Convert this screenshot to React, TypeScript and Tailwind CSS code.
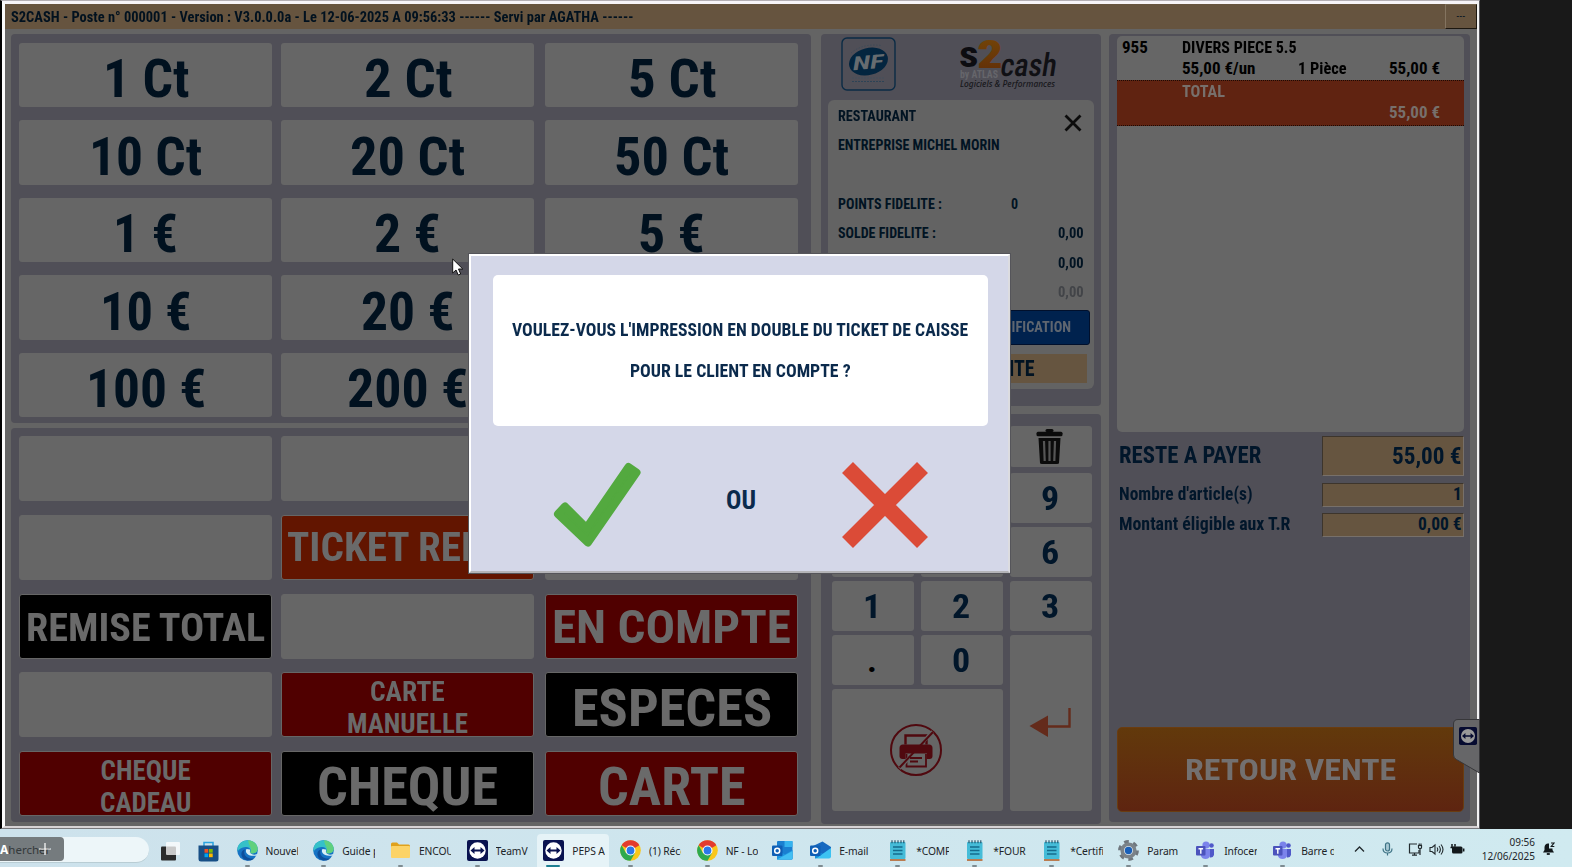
import { useLayoutEffect, useRef, type ReactNode } from "react";

/* Condensed label: squeezes its text horizontally to a given width. */
function Fit({ w, children, className = "" }: { w: number; children: ReactNode; className?: string }) {
  const ref = useRef<HTMLSpanElement>(null);
  useLayoutEffect(() => {
    const el = ref.current;
    if (el) el.style.transform = `scaleX(${w / el.offsetWidth})`;
  }, [w, children]);
  return (
    <span className={`block shrink-0 text-left ${className}`} style={{ width: w }}>
      <span ref={ref} className="inline-block origin-left whitespace-nowrap">
        {children}
      </span>
    </span>
  );
}

const CASH: [string, number][] = [
  ["1 Ct", 86], ["2 Ct", 88], ["5 Ct", 88],
  ["10 Ct", 113], ["20 Ct", 115], ["50 Ct", 115],
  ["1 €", 65], ["2 €", 67], ["5 €", 67],
  ["10 €", 92], ["20 €", 94], ["50 €", 94],
  ["100 €", 120], ["200 €", 121], ["500 €", 121],
];

type PayKey = { tone?: "black" | "red" | "orange"; lines?: [string, number][]; size?: string };
const PAY: PayKey[] = [
  {}, {}, {},
  {}, { tone: "orange", lines: [["TICKET REPAS", 241]], size: "text-[41px]" }, {},
  { tone: "black", lines: [["REMISE TOTAL", 239]], size: "text-[39px] pt-1" }, {},
  { tone: "red", lines: [["EN COMPTE", 239]], size: "text-[46px] pt-0.5" },
  {}, { tone: "red", lines: [["CARTE", 75], ["MANUELLE", 121]], size: "text-[27px] pt-[7px]" },
  { tone: "black", lines: [["ESPECES", 200]], size: "text-[51px] pt-[7px]" },
  { tone: "red", lines: [["CHEQUE", 90], ["CADEAU", 91]], size: "text-[27px] pt-[6px]" },
  { tone: "black", lines: [["CHEQUE", 181]], size: "text-[53px] pt-2" },
  { tone: "red", lines: [["CARTE", 148]], size: "text-[53px] pt-2" },
];
const TONES = { black: "bg-black", red: "bg-[#500000]", orange: "bg-[#621500]" };

function CashGrid() {
  return (
    <section className="h-[389px] rounded bg-[#504f57] px-2 pt-[8.500px]">
      <div className="grid grid-cols-[262px_264px_253px] gap-y-[13px]">
        {CASH.map(([label, w]) => (
          <button key={label} className="flex h-[64.500px] w-[253px] items-center justify-center rounded-[3px] bg-[#666] pt-[10px] text-[53px] leading-none text-[#01111f]">
            <Fit w={w}>{label}</Fit>
          </button>
        ))}
      </div>
    </section>
  );
}

function PayGrid() {
  return (
    <section className="h-[394px] rounded bg-[#504f57] px-2 pt-2">
      <div className="grid grid-cols-[262px_264px_253px] gap-y-[13.75px]">
        {PAY.map((k, i) => (
          <button key={i} className={`flex h-[65px] w-[253px] flex-col items-center justify-center rounded-[3px] border border-[#666] text-[#6a6a6a] ${k.tone ? TONES[k.tone] : "bg-[#666]"} ${k.size ?? ""}`}>
            {k.lines?.map(([t, w]) => (
              <Fit key={t} w={w} className={k.lines!.length > 1 ? "leading-[32px]" : "leading-none"}>{t}</Fit>
            ))}
          </button>
        ))}
      </div>
    </section>
  );
}

function NfLogo() {
  return (
    <svg className="h-[54px] w-[55px]" viewBox="0 0 55 54">
      <rect x="1" y="1" width="53" height="52" rx="5" fill="none" stroke="#0a2b45" strokeWidth="1.4" />
      <path d="M10 16 Q22 6 40 8.500" fill="none" stroke="#3f4c58" strokeWidth="1" strokeDasharray="1.500 1.500" />
      <ellipse cx="27.500" cy="24.500" rx="19.800" ry="13.500" fill="#03253f" transform="rotate(-14 27.500 24.500)" />
      <text x="11.500" y="32" fontSize="19" fontWeight="700" fontStyle="italic" fill="#666c70" textLength="31" lengthAdjust="spacingAndGlyphs" transform="rotate(-5 27 25)">NF</text>
      <path d="M11 41h33" stroke="#45515c" strokeWidth="1" strokeDasharray="2 1" />
      <path d="M11 44.500h33" stroke="#2d4356" strokeWidth="1" strokeDasharray="2 1" />
    </svg>
  );
}

function BrandLogo() {
  return (
    <svg className="h-[52px] w-[100px]" viewBox="0 0 100 52">
      <defs>
        <linearGradient id="two" x1="0" y1="0" x2="0" y2="1">
          <stop offset="0" stopColor="#754708" />
          <stop offset="1" stopColor="#602c08" />
        </linearGradient>
      </defs>
      <text x="-1" y="30" fontSize="36" fontWeight="700" fill="#0c0c10" textLength="19.500" lengthAdjust="spacingAndGlyphs">s</text>
      <text x="17" y="30.500" fontSize="38" fontWeight="900" fill="url(#two)" textLength="26" lengthAdjust="spacingAndGlyphs">2</text>
      <text x="38.500" y="39" fontSize="32" fontWeight="500" fill="#101014" textLength="56" lengthAdjust="spacingAndGlyphs" transform="translate(7 0) skewX(-9)">cash</text>
      <text x="0" y="40.500" fontSize="10.500" fontWeight="700" fill="#66666b" textLength="38" lengthAdjust="spacingAndGlyphs">by ATLAS</text>
      <text x="0" y="50" fontSize="8" fontStyle="italic" fontWeight="500" fill="#17171b" fontFamily="Noto Sans" textLength="95" lengthAdjust="spacingAndGlyphs">Logiciels &amp; Performances</text>
    </svg>
  );
}

function InfoRow({ label, w, value, vw, pos = "pr-[10px]", dim }: { label?: string; w?: number; value?: string; vw?: number; pos?: string; dim?: boolean }) {
  return (
    <div className={`flex h-[29.3px] items-center justify-between pl-[10px] ${pos}`}>
      {label ? <Fit w={w!}>{label}</Fit> : <span />}
      {value && <Fit w={vw!} className={dim ? "text-[#424448]" : ""}>{value}</Fit>}
    </div>
  );
}

function CustomerPanel() {
  return (
    <section className="h-[372px] rounded bg-[#504f57] px-[7px]">
      <div className="flex h-[65.500px] items-start justify-between pl-[12.500px] pr-[34.500px] pt-[3px]">
        <NfLogo />
        <BrandLogo />
      </div>
      <div className="relative h-[289.500px] rounded-md bg-[#636363] pt-[2px] text-[14px] leading-none text-[#011322]">
        <svg className="absolute right-[12.500px] top-[14.500px] h-[18px] w-[18px]" viewBox="0 0 18 18">
          <path d="M1.500 1.500 16.500 16.500M16.500 1.500 1.500 16.500" stroke="#0c0c0c" strokeWidth="2.800" />
        </svg>
        <InfoRow label="RESTAURANT" w={78} />
        <InfoRow label="ENTREPRISE MICHEL MORIN" w={162} />
        <InfoRow />
        <InfoRow label="POINTS FIDELITE :" w={104} value="0" vw={7} pos="pr-[76px]" />
        <InfoRow label="SOLDE FIDELITE :" w={98} value="0,00" vw={26} />
        <InfoRow value="0,00" vw={26} />
        <InfoRow value="0,00" vw={26} dim />
        <div className="ml-auto mr-[4px] mt-[3px] flex h-[35.500px] w-[126px] items-center justify-end rounded-[3px] border border-[#01102c] bg-[#00224e] pr-[18px] pt-[1px] text-[14.500px] text-[#5f6670]">
          <Fit w={87}>MODIFICATION</Fit>
        </div>
        <div className="ml-auto mr-[7px] mt-[9px] flex h-[28.500px] w-[252px] items-center justify-end bg-[#665540] pr-[52px] text-[21.500px]">
          <Fit w={148}>MISE EN ATTENTE</Fit>
        </div>
      </div>
    </section>
  );
}

const KEY = "flex items-center justify-center rounded-[3px] bg-[#666] pr-[2px] text-[34px] leading-none text-[#01162a]";

function Keypad() {
  return (
    <section className="h-[410px] rounded bg-[#504f57] pl-[11px] pt-[12px]">
      <div className="grid grid-cols-[82px_82px_82px] grid-rows-[43px_50px_50px_50px_50px_122px] gap-x-[6.800px] gap-y-[4px]">
        <div className={`${KEY} col-span-2 mb-[2.500px]`} />
        <button className={`${KEY} mb-[2.500px]`}>
          <svg className="h-[35px] w-[27px]" viewBox="0 0 27 35" fill="#0b0b0b">
            <rect x="9.500" y="0" width="8" height="3" rx="1.500" />
            <rect x="0.500" y="2.800" width="26" height="4.400" rx="1.500" />
            <path d="M2.500 9h22l-1.500 25q0 1-2 1H6q-2 0-2-1z" />
            <path d="M8 12l.7 20M13.500 12v20M19 12l-.7 20" stroke="#555" strokeWidth="2.200" />
          </svg>
        </button>
        {["7", "8", "9", "4", "5", "6", "1", "2", "3"].map((n) => (
          <button key={n} className={KEY}><Fit w={18}>{n}</Fit></button>
        ))}
        <button className={KEY}><span className="text-black">.</span></button>
        <button className={KEY}><Fit w={18}>0</Fit></button>
        <button className={`${KEY} row-span-2`}>
          <svg className="h-[30px] w-[42px]" viewBox="0 0 42 30">
            <path d="M40.500 0V18.500H16" fill="none" stroke="#642b1b" strokeWidth="2.400" />
            <path d="M0.500 18 19 7.500V29z" fill="#642b1b" />
          </svg>
        </button>
        <button className={`${KEY} col-span-2`}>
          <svg className="h-[52px] w-[52px]" viewBox="0 0 52 52">
            <circle cx="26" cy="26" r="25" fill="none" stroke="#50090f" strokeWidth="2" />
            <path d="M15.500 20.500V11.500H36.500V20.500" fill="none" stroke="#50090f" strokeWidth="2.400" />
            <path d="M13 20.500h26q3.500 0 3.500 3.500v8q0 3-3 3H37V29.500H15.500V35H12.500q-3 0-3-3v-8q0-3.500 3.500-3.500z" fill="#50090f" />
            <path d="M16.500 30v12.500h19.500V30M20 34h12M20 37.500h8" fill="none" stroke="#50090f" strokeWidth="1.800" />
            <path d="M42.500 7.500 33.500 17.500M19 34 9.500 44.500" stroke="#666" strokeWidth="3.500" />
            <path d="M43 8 9.500 43.500" stroke="#50090f" strokeWidth="2" />
          </svg>
        </button>
      </div>
    </section>
  );
}

function Field({ label, w, value, vw, row, box }: { label: string; w: number; value: string; vw: number; row: string; box: string }) {
  return (
    <div className={`flex w-[347px] items-center justify-between leading-none ${row}`}>
      <Fit w={w} className="ml-[2px]">{label}</Fit>
      <div className={`flex w-[142px] items-center justify-end border border-b-[#77706a] border-l-[#3d352c] border-r-[#77706a] border-t-[#3d352c] bg-[#665540] pr-[1px] ${box}`}>
        <Fit w={vw}>{value}</Fit>
      </div>
    </div>
  );
}

function TicketPanel() {
  return (
    <section className="flex h-[788px] w-[361px] flex-col rounded bg-[#504f57] px-2 pb-[10px] pt-[2px] text-[#01162a]">
      <div className="h-[396px] w-[347px] rounded-[5px] bg-[#666] text-[17px] leading-none text-black">
        <div className="h-[44px] pt-[1px]">
          <div className="flex h-[21px] items-center pl-[5px]">
            <Fit w={26}>955</Fit>
            <Fit w={115} className="ml-[33.500px]">DIVERS PIECE 5.5</Fit>
          </div>
          <div className="flex h-[20.500px] items-center pl-[65px]">
            <Fit w={73}>55,00 €/un</Fit>
            <Fit w={49} className="ml-[43px]">1 Pièce</Fit>
            <Fit w={51} className="ml-[42px]">55,00 €</Fit>
          </div>
        </div>
        <div className="h-[45.500px] border-y border-dotted border-[#1c0a04] bg-[#602311] text-[#77706c]">
          <div className="flex h-[20.500px] items-center pl-[65px]"><Fit w={43}>TOTAL</Fit></div>
          <div className="flex h-[21.500px] items-center pl-[272px]"><Fit w={51}>55,00 €</Fit></div>
        </div>
      </div>
      <Field label="RESTE A PAYER" w={142} value="55,00 €" vw={70} row="mt-[4px] h-[40px] text-[23.500px]" box="h-[40px] pt-[1px]" />
      <Field label="Nombre d'article(s)" w={134} value="1" vw={9} row="mt-[7px] h-[24px] text-[17.500px]" box="h-[24px]" />
      <Field label="Montant éligible aux T.R" w={171} value="0,00 €" vw={44} row="mt-[6px] h-[24px] text-[17.500px]" box="h-[24px]" />
      <button className="mt-auto flex h-[85.500px] w-[347px] shrink-0 items-center justify-center rounded-[5px] border border-[#6a3c10] bg-linear-to-b from-[#62390b] to-[#5e2410] pt-[2px] text-[29.500px] text-[#737070]">
        <Fit w={211}>RETOUR VENTE</Fit>
      </button>
    </section>
  );
}

function TeamIcon({ className = "h-[21px] w-[21px]" }: { className?: string }) {
  return (
    <svg className={className} viewBox="0 0 21 21">
      <rect width="21" height="21" rx="2" fill="#0a1350" />
      <circle cx="10.500" cy="10.500" r="8.200" fill="#fff" />
      <path d="M3.500 10.500 7.500 7v2.500h6V7l4 3.500-4 3.500v-2.500h-6V14z" fill="#0a1350" />
    </svg>
  );
}

function Dialog() {
  return (
    <div className="absolute left-[469px] top-[254px] flex h-[319px] w-[541px] flex-col items-center border-2 border-b-[#b4b4b8] border-l-white border-r-[#dcdce0] border-t-white bg-[#d4d7e8] pl-[1px] pt-[19px] text-[#0b2a4c] shadow-[0_0_0_1px_#55555a]">
      <div className="flex h-[150.500px] w-[495px] flex-col items-center rounded-[5px] bg-white pt-[34px] text-[18px]">
        <Fit w={456} className="h-[41px] leading-[41px]">VOULEZ-VOUS L'IMPRESSION EN DOUBLE DU TICKET DE CAISSE</Fit>
        <Fit w={221} className="h-[41px] leading-[41px]">POUR LE CLIENT EN COMPTE ?</Fit>
      </div>
      <div className="mt-[35.500px] flex w-[375px] items-center justify-between">
        <svg className="h-[87px] w-[88px]" viewBox="0 0 88 87">
          <path d="M75.500 6 83.500 11.500 35 81.500 5 53 12 45.500 33.500 67z" fill="#53a93f" stroke="#53a93f" strokeWidth="8" strokeLinejoin="round" />
        </svg>
        <Fit w={30} className="pb-[7px] text-[25.500px] leading-none">OU</Fit>
        <svg className="h-[86px] w-[86px]" viewBox="0 0 86 86">
          <path d="M5.500 5.500 80.500 80.500M80.500 5.500 5.500 80.500" stroke="#db4b37" strokeWidth="15.500" />
        </svg>
      </div>
    </div>
  );
}

/* ---------- taskbar ---------- */
function EdgeIcon() {
  return (
    <svg className="h-[21px] w-[21px]" viewBox="0 0 21 21">
      <circle cx="10.500" cy="10.500" r="10.300" fill="#1673c4" />
      <path d="M.6 8.500C2-2.500 20.500-2.500 20.700 9c0 4-5 5.500-7.700 3.500 2-3-1-6-4.500-5.500C5 7.300 1.500 9 .6 12z" fill="#35c1c8" />
      <path d="M11 .2c6 .3 9.700 4.500 9.700 8.800 0 4-5 5.500-7.700 3.500 2-2 .5-6-1-8z" fill="#6bd36b" opacity=".8" />
      <path d="M8 9.500c-2.500 5 1.500 10 9.500 8.800C14 22 6 21.500 4.500 15 4 12 5.500 10 8 9.500z" fill="#0d4f9c" />
      <path d="M9.500 9c-2 3 1 8 10 6.500l1-1.500c-4 1.500-6 .5-7.500-1.500-.5-1 .5-1.500 0-3z" fill="#d8eff6" />
    </svg>
  );
}
function ChromeIcon() {
  return (
    <svg className="h-[21px] w-[21px]" viewBox="0 0 21 21">
      <circle cx="10.500" cy="10.500" r="10.300" fill="#f9c71b" />
      <path d="M10.500 10.500 1.600 5.300A10.300 10.300 0 0 1 19.400 5.300z" fill="#e33b2e" />
      <path d="M1.600 5.300A10.300 10.300 0 0 0 10.500 20.800L15 13 6 13z" fill="#2da94f" />
      <circle cx="10.500" cy="10.500" r="5" fill="#fff" />
      <circle cx="10.500" cy="10.500" r="3.900" fill="#2b78e8" />
    </svg>
  );
}
function FolderIcon() {
  return (
    <svg className="h-[21px] w-[21px]" viewBox="0 0 21 21">
      <path d="M1 4q0-1.500 1.500-1.500H7l2 2h9.500Q20 4.500 20 6v6H1z" fill="#e0a11c" />
      <rect x="1" y="6" width="19" height="12" rx="1" fill="#fcd367" />
    </svg>
  );
}
function OutlookIcon() {
  return (
    <svg className="h-[21px] w-[21px]" viewBox="0 0 21 21">
      <rect x="5" y="1" width="15.500" height="18.500" rx="1" fill="#1a7fd0" />
      <path d="M12.500 1h8v6h-8z" fill="#35b3ee" />
      <path d="M5 10l8 4.500 7.500-4.500v8.500q0 1-1 1H5z" fill="#1f97e0" />
      <path d="M5 19.500 20.500 11v7.500q0 1-1 1z" fill="#42bff3" />
      <rect x="0" y="5.500" width="10.500" height="10.500" rx="1" fill="#0f5fb5" />
      <circle cx="5.200" cy="10.700" r="2.500" fill="none" stroke="#fff" strokeWidth="1.500" />
    </svg>
  );
}
function MailIcon() {
  return (
    <svg className="h-[21px] w-[21px]" viewBox="0 0 21 21">
      <path d="M3 6 12.500 1.500 21 7v3L7 18z" fill="#1769c0" />
      <path d="M21 8v8.500q0 2-2 2H6z" fill="#3cc2f2" />
      <path d="M5 13 13 13.500 6 18.500H5z" fill="#1590dc" />
      <rect x="0" y="5.500" width="10.500" height="10.500" rx="1" fill="#0f5fb5" />
      <circle cx="5.200" cy="10.700" r="2.500" fill="none" stroke="#fff" strokeWidth="1.500" />
    </svg>
  );
}
function NoteIcon() {
  return (
    <svg className="h-[21px] w-[21px]" viewBox="0 0 21 21">
      <rect x="3" y="2" width="15.500" height="17" rx="1" fill="#45bcd8" />
      <path d="M3 20h15.500" stroke="#b5622a" strokeWidth="1.600" />
      <path d="M5 .3v3M8 .3v3M11 .3v3M14 .3v3M16.800 .3v3" stroke="#1f4c63" strokeWidth="1.100" />
      <path d="M6 7h9.500M6 10.500h9.500M6 14h9.500" stroke="#146b8c" strokeWidth="1.300" />
    </svg>
  );
}
function GearIcon() {
  return (
    <svg className="h-[21px] w-[21px]" viewBox="0 0 21 21">
      <circle cx="10.500" cy="10.500" r="8.700" fill="none" stroke="#6f777e" strokeWidth="3.400" strokeDasharray="4.600 4.510" />
      <circle cx="10.500" cy="10.500" r="6.300" fill="#dce6ec" stroke="#7b8389" strokeWidth="3.600" />
      <circle cx="10.500" cy="10.500" r="3.700" fill="#1a60b8" />
    </svg>
  );
}
function TeamsIcon() {
  return (
    <svg className="h-[21px] w-[21px]" viewBox="0 0 21 21">
      <circle cx="11" cy="5" r="3.600" fill="#7b83eb" />
      <circle cx="16.500" cy="5.500" r="2.300" fill="#5059c9" />
      <path d="M13 9h6v6q-1 3-4 2.500z" fill="#5059c9" />
      <path d="M6 9h9v7q-1 3-4.500 3T6 16z" fill="#7b83eb" />
      <rect x="1" y="6" width="9.500" height="9.500" rx="1" fill="#4b53bc" />
      <path d="M3.500 8.700h4.600M5.800 8.700v5" stroke="#fff" strokeWidth="1.400" />
    </svg>
  );
}

type TaskItem = { icon: ReactNode; label: string; active?: boolean };
const TASKS: TaskItem[] = [
  { icon: <EdgeIcon />, label: "Nouvel" },
  { icon: <EdgeIcon />, label: "Guide p" },
  { icon: <FolderIcon />, label: "ENCOU" },
  { icon: <TeamIcon />, label: "TeamV" },
  { icon: <TeamIcon />, label: "PEPS A", active: true },
  { icon: <ChromeIcon />, label: "(1) Réce" },
  { icon: <ChromeIcon />, label: "NF - Lo" },
];
const TASKS_2: TaskItem[] = [
  { icon: <MailIcon />, label: "E-mail" },
  { icon: <NoteIcon />, label: "*COMP" },
  { icon: <NoteIcon />, label: "*FOURN" },
  { icon: <NoteIcon />, label: "*Certifi" },
  { icon: <GearIcon />, label: "Param" },
  { icon: <TeamsIcon />, label: "Infocen" },
  { icon: <TeamsIcon />, label: "Barre d" },
];

function Task({ icon, label, active }: TaskItem) {
  return (
    <div className={`relative flex h-[33px] w-[72px] shrink-0 items-center rounded-t pl-[6px] ${active ? "bg-[#e6f3f7]" : ""}`}>
      {icon}
      <span className="ml-[8px] w-[32.500px] overflow-hidden whitespace-nowrap text-[10.300px] leading-4 tracking-[-0.1px]">{label}</span>
      <span className={`absolute bottom-0 h-[2px] rounded ${active ? "left-[9px] w-[14px] bg-[#1d7f92]" : "left-[14px] w-[5px] bg-[#7d8b91]"}`} />
    </div>
  );
}

function Taskbar() {
  return (
    <footer className="flex h-[38px] items-end bg-linear-to-r from-[#cde2ec] to-[#d0eaf0] font-['Noto_Sans',sans-serif] font-normal text-[#1d2428]">
      <div className="relative mb-[4px] h-[26px] w-[149px] rounded-r-full border-b border-[#b9cdd4] bg-[#edf6f9]">
        <div className="flex h-[24px] w-[64px] items-center rounded-r bg-[#757b7e] pt-[2px] text-[11.500px] text-[#34393b]">
          <span className="text-[12px] font-bold text-white">A</span>
          <span className="whitespace-nowrap">hercher</span>
        </div>
        <svg className="absolute left-[39px] top-[6px] h-3 w-3" viewBox="0 0 12 12"><path d="M6 0v12M0 6h12" stroke="#fff" strokeWidth="1.200" /></svg>
      </div>
      <div className="mb-[5px] ml-[12px] flex items-center gap-[16px]">
        <svg className="h-[21px] w-[21px]" viewBox="0 0 21 21">
          <rect x="0" y="5.500" width="15" height="14" rx="1" fill="#2b2b2b" />
          <rect x="5" y="1" width="14" height="13" rx="1" fill="#fff" opacity=".75" />
        </svg>
        <svg className="h-[21px] w-[21px]" viewBox="0 0 21 21">
          <path d="M6 5V1.500h9V5" fill="none" stroke="#2aa3e0" strokeWidth="1.500" />
          <path d="M.5 4.500h20V18q0 2.500-2.500 2.500H3Q.5 20.500.5 18z" fill="#174f86" />
          <path d="M6.500 8h3.700v3.700H6.500z" fill="#f25022" /><path d="M11 8h3.700v3.700H11z" fill="#7fba00" />
          <path d="M6.500 12.500h3.700v3.700H6.500z" fill="#00a4ef" /><path d="M11 12.500h3.700v3.700H11z" fill="#ffb900" />
        </svg>
      </div>
      <div className="ml-[11.500px] flex gap-[4.700px]">
        {TASKS.map((t, i) => <Task key={i} {...t} />)}
      </div>
      <div className="mb-[6px] ml-[9.500px] w-[21px]"><OutlookIcon /></div>
      <div className="ml-[11px] flex gap-[5px]">
        {TASKS_2.map((t, i) => <Task key={i} {...t} />)}
      </div>
      <div className="ml-auto flex h-[38px] shrink-0 items-center pr-[17px] pt-[2px]">
        <svg className="mr-[17px] h-[8px] w-[11px]" viewBox="0 0 11 8"><path d="M1 6.500 5.500 2 10 6.500" fill="none" stroke="#222a2e" strokeWidth="1.300" /></svg>
        <svg className="mr-[15px] h-[14px] w-[11px]" viewBox="0 0 11 14" fill="none" stroke="#3e7385" strokeWidth="1.200">
          <rect x="3.500" y=".8" width="4" height="8.200" rx="2" fill="#a9c9d4" />
          <path d="M1 6.500q0 4.500 4.500 4.500T10 6.500M5.500 11v2.500" />
        </svg>
        <svg className="mr-[6px] h-[14px] w-[15px]" viewBox="0 0 15 14" fill="none" stroke="#222a2e" strokeWidth="1.200">
          <path d="M9 2H1.500v9H11V8M4 13.200h5M6.500 11v2" />
          <path d="M10.500 3.500v2q0 1 1 1h1q1 0 1-1v-2zM11.200 1.500v2M13 1.500v2M12 6.500V13" />
        </svg>
        <svg className="mr-[6px] h-[13px] w-[15px]" viewBox="0 0 15 13" fill="none" stroke="#222a2e" strokeWidth="1.100">
          <path d="M1 4.500h2L6 2v9L3 8.500H1zM8 4.500q1.500 2 0 4M10 3q2.800 3.500 0 7M12 1.500q4 5 0 10" />
        </svg>
        <svg className="mr-[16px] h-[12px] w-[15px]" viewBox="0 0 15 12">
          <rect x="2" y="3.500" width="10.500" height="7" rx="1.500" fill="#12181b" />
          <path d="M13.700 5.500v3M2 1v4M5 1v2.500M.5 4.500h5" stroke="#12181b" strokeWidth="1.500" />
        </svg>
        <div className="flex w-[54px] flex-col items-end text-[10px] leading-[14px]">
          <span>09:56</span>
          <span className="whitespace-nowrap">12/06/2025</span>
        </div>
        <svg className="ml-[7px] h-[14px] w-[13px]" viewBox="0 0 13 14">
          <path d="M1 10.500 2.500 8V5Q3 1.500 6 1.500h1V6.500h3.500V8l1.500 2.500z" fill="#12181b" />
          <path d="M4.800 12h3" stroke="#12181b" strokeWidth="1.800" />
          <path d="M9 1h3L9.300 4.500h3" fill="none" stroke="#12181b" strokeWidth="1.200" />
        </svg>
      </div>
    </footer>
  );
}

export default function App() {
  return (
    <div className="relative flex h-[867px] w-[1572px] flex-col overflow-hidden font-['Roboto_Condensed',Roboto,sans-serif] font-bold">
      <div className="flex h-[829px] bg-[#191919]">
        <div className="w-[1480px] border-b border-l-2 border-r border-t border-b-[#77777b] border-l-black border-r-[#55555a] border-t-[#b3afb4] bg-[#666]">
          <div className="h-[827px] border-b-2 border-l-[3px] border-r-2 border-t-[3px] border-b-[#d6d2d4] border-l-[#fafafa] border-r-[#f2f2f2] border-t-[#f6f4f8] bg-[#646464]">
            <header className="flex h-[25px] items-center justify-between bg-[#66543f] pl-[6px] text-[14px] leading-none text-[#01111f]">
              <Fit w={622.5}>S2CASH - Poste n° 000001 - Version : V3.0.0.0a - Le 12-06-2025 A 09:56:33 ------ Servi par AGATHA ------</Fit>
              <span className="flex h-[25px] w-[32px] items-center justify-center border border-b-[#1c1710] border-l-[#847460] border-r-[#1c1710] border-t-[#76664f] text-[10px] font-normal tracking-[0.5px]">---</span>
            </header>
            <div className="flex pl-[6px] pt-[5px]">
              <div className="flex w-[800px] flex-col gap-[5px]">
                <CashGrid />
                <PayGrid />
              </div>
              <div className="ml-[10px] flex w-[280px] flex-col gap-2">
                <CustomerPanel />
                <Keypad />
              </div>
              <div className="ml-[8px]">
                <TicketPanel />
              </div>
            </div>
          </div>
        </div>
      </div>
      <Taskbar />
      <div className="absolute left-[1453px] top-[719px] h-[55px] w-[27px]">
        <svg className="absolute inset-0 h-[55px] w-[27px]" viewBox="0 0 27 55">
          <path d="M26.500 .5H5Q.5.5.5 5V36q0 3 3 4.500L26.500 54z" fill="#666668" stroke="#37373a" />
        </svg>
        <TeamIcon className="absolute left-[6px] top-[8px] h-[18px] w-[18px] brightness-[.6]" />
      </div>
      <Dialog />
      <svg className="absolute left-[452px] top-[258px] h-[19px] w-[12px]" viewBox="0 0 12 19">
        <path d="M.7 1v14l3.300-3 2.200 5 2.500-1-2.200-5h4.300z" fill="#fff" stroke="#111" strokeWidth="1" />
      </svg>
    </div>
  );
}
